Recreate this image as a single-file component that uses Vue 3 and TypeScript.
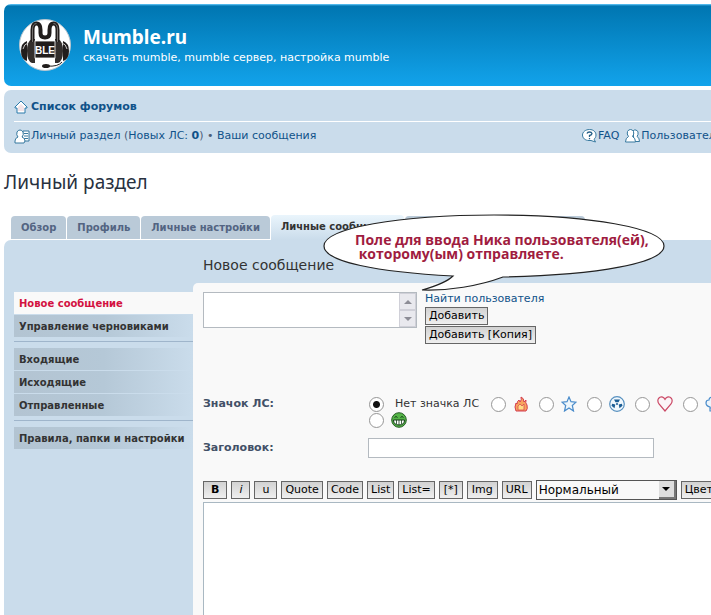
<script setup lang="ts">
import { ref } from 'vue'

interface Tab {
  label: string
  active?: boolean
}

const tabs: Tab[] = [
  { label: 'Обзор' },
  { label: 'Профиль' },
  { label: 'Личные настройки' },
  { label: 'Личные сообщения', active: true },
]

const menu: Tab[][] = [
  [{ label: 'Новое сообщение', active: true }, { label: 'Управление черновиками' }],
  [{ label: 'Входящие' }, { label: 'Исходящие' }, { label: 'Отправленные' }],
  [{ label: 'Правила, папки и настройки' }],
]

const icons = ['fire', 'star', 'radioactive', 'heart', 'bulb']
const codes = ['B', 'i', 'u', 'Quote', 'Code', 'List', 'List=', '[*]', 'Img', 'URL']

const chosen = ref('none')
const recipients = ref('')
const subject = ref('')
const message = ref('')
const size = ref('normal')
</script>

<template>
  <div class="page">
    <header class="banner">
      <svg class="logo" viewBox="0 0 52 52" aria-hidden="true">
        <circle cx="26" cy="26" r="25.5" fill="#fff" stroke="#b9c6cf" />
        <path d="M8 22Q2 24 2 32T8 42zM44 22q6 2 6 10t-6 10z" fill="#211d1c" />
        <path d="M13 20q-5 2-5 12t5 12h3V20zM39 20q5 2 5 12t-5 12h-3V20z" fill="#332e2c" />
        <path d="M4 30q1-5 5-6M48 30q-1-5-5-6" fill="none" stroke="#c9c6c4" />
        <path d="M13.500 23V11q0-6.500 4-6.500t4 6.500v3q0 4.500 4.500 4.500t4.500-4.500v-3q0-6.500 4-6.500t4 6.500v12" fill="none" stroke="#211d1c" stroke-width="4" />
        <path d="M13.500 23V11q0-6.500 4-6.500M34.500 4.500q4 0 4 6.500v12" fill="none" stroke="#8c8785" stroke-width=".8" />
        <rect x="16" y="22" width="20" height="17" fill="#211d1c" stroke="#fff" stroke-width=".8" />
        <text x="26" y="35" text-anchor="middle" class="logo-text">BLE</text>
        <path d="M43 43q-4 5-15 4" fill="none" stroke="#211d1c" />
        <ellipse cx="27" cy="47" rx="4" ry="2" fill="#211d1c" />
      </svg>
      <div>
        <h1>Mumble.ru</h1>
        <p>скачать mumble, mumble сервер, настройка mumble</p>
      </div>
    </header>

    <nav class="navbar">
      <div class="crumbs">
        <svg width="14" height="14" viewBox="0 0 14 14" aria-hidden="true">
          <path d="M7 1 1 7v1h2v5h8V8h2V7z" fill="#fff" stroke="#2b7bab" stroke-linejoin="round" />
          <path d="M7 4 4 7v4h6V7z" fill="#f2e4e8" />
        </svg>
        <a href="#" class="strong">Список форумов</a>
      </div>
      <div class="links">
        <div class="own">
          <svg width="16" height="15" viewBox="0 0 16 15" aria-hidden="true">
            <path d="M9 2h6v10H8z" fill="#fff" stroke="#37799f" />
            <path d="M10 4.500h4M10 7h4M10 9.500h4" stroke="#37799f" />
            <path d="M1 14v-2q0-3 3-4-2-2-1-5 1-2 3-2t3 2q1 3-1 5 3 1 3 4l-1 2z" fill="#fff" stroke="#37799f" />
          </svg>
          <a href="#">Личный раздел</a><span>&nbsp;(</span><a href="#">Новых ЛС: <b>0</b></a><span>)&nbsp;•&nbsp;</span><a href="#">Ваши сообщения</a>
        </div>
        <div class="site">
          <a href="#">
            <svg width="15" height="14" viewBox="0 0 15 14" aria-hidden="true">
              <path d="M7.500.5c4 0 6.500 2.500 6.500 5.500 0 2-1 3.500-2 4.200L13.500 13 9 11.500H7C3 11.500.5 9 .5 6S3.500.5 7.500.5z" fill="#fff" stroke="#37799f" />
              <path d="M5 4.500Q5.500 3 7.500 3T10 4.500Q10 6 7.500 6.500V8M7.500 9v1.300" fill="none" stroke="#245f87" stroke-width="1.300" />
            </svg>
            FAQ
          </a>
          <a href="#">
            <svg width="15" height="14" viewBox="0 0 15 14" aria-hidden="true">
              <path d="M8 2q1-1.500 3-1 3 1 2 4.500l-1 2q2.500 1 2.500 5H9z" fill="#fff" stroke="#37799f" />
              <path d="M.5 13q0-4 3-5.500Q1.500 5 2.500 2.500 3.500.5 5.500.5T8.500 2.500q1 2.500-1 5 3 1.500 3 5.500z" fill="#fff" stroke="#37799f" />
            </svg>
            Пользователи
          </a>
        </div>
      </div>
    </nav>

    <h2>Личный раздел</h2>

    <div class="workspace">
      <div class="tabs">
        <a v-for="tab in tabs" :key="tab.label" href="#" class="tab" :class="{ active: tab.active }">{{ tab.label }}</a>
        <span class="tab covered"></span>
      </div>

      <div class="panel">
        <aside class="menu">
          <ul v-for="(group, index) in menu" :key="index">
            <li v-for="item in group" :key="item.label">
              <a href="#" :class="{ active: item.active }">{{ item.label }}</a>
            </li>
          </ul>
        </aside>

        <main>
          <h3>Новое сообщение</h3>
          <form class="form" @submit.prevent>
            <div class="recipients">
              <div class="list-box">
                <textarea v-model="recipients" aria-label="Получатели"></textarea>
                <div class="scroller" aria-hidden="true">
                  <span><svg width="8" height="4" viewBox="0 0 8 4"><path d="m4 0 4 4H0z" fill="#8d8d96" /></svg></span>
                  <span><svg width="8" height="4" viewBox="0 0 8 4"><path d="m4 4 4-4H0z" fill="#8d8d96" /></svg></span>
                </div>
              </div>
              <div class="actions">
                <a href="#">Найти пользователя</a>
                <button type="button">Добавить</button>
                <button type="button">Добавить [Копия]</button>
              </div>
            </div>

            <div class="field icon-field">
              <span class="label">Значок ЛС:</span>
              <div class="icons">
                <div class="icon-row">
                  <label class="none"><input v-model="chosen" type="radio" name="icon" value="none">Нет значка ЛС</label>
                  <label v-for="icon in icons" :key="icon">
                    <input v-model="chosen" type="radio" name="icon" :value="icon" :aria-label="icon">
                    <svg width="16" height="16" viewBox="0 0 16 16" aria-hidden="true">
                      <g v-if="icon === 'fire'">
                        <path d="M3 15Q1 11 3 7l1 1Q4 5 6 4l1 2q2-2 1-5 3 1 3 5l2-2q-1 3 1 5 1 4-1 6z" fill="#f7a45e" stroke="#d43d51" />
                        <path d="m5 14 0-4 2-2 2 2 2-2v6z" fill="#ffdc84" stroke="#d43d51" stroke-width=".7" />
                      </g>
                      <path v-else-if="icon === 'star'" d="m8 1 2 4.700 5 .5-3.700 3.300L12.500 15 8 12l-4.500 3 1.200-5.500L1 6.200l5-.5z" fill="#eef6fb" stroke="#4a8ccb" stroke-width="1.200" />
                      <g v-else-if="icon === 'radioactive'">
                        <circle cx="8" cy="8" r="7.300" fill="#f1f8fd" stroke="#5790bf" stroke-width="1.200" />
                        <path d="M6.500 6.300 5 3.500h6L9.500 6.300zM6.300 8.500l-.8 3.800L2.500 9.800 3.200 7.800zM9.700 8.500l.8 3.800 3-2.500-.7-2z" fill="#1b5d94" />
                        <circle cx="8" cy="8" r="1" fill="#1b5d94" />
                      </g>
                      <path v-else-if="icon === 'heart'" d="M8 15 2 8Q0 5 1.500 2.500 4-.5 7 2l1 1.500L9 2q3-2.500 5.500.5Q16 5 14 8z" fill="#fbf5f7" stroke="#cb4966" stroke-width="1.200" />
                      <path v-else d="M5 15v-4Q1 10 1 7t3-3q0-3 4-3t4 3q3 0 3 3t-4 4v4zM5 12h6" fill="#edf5fb" stroke="#4a8ccb" stroke-width="1.200" />
                    </svg>
                  </label>
                </div>
                <div class="icon-row">
                  <label>
                    <input v-model="chosen" type="radio" name="icon" value="grin" aria-label="grin">
                    <svg width="16" height="16" viewBox="0 0 16 16" aria-hidden="true">
                      <circle cx="8" cy="8" r="7.300" fill="#55b547" stroke="#285d26" />
                      <path d="M3.500 5.500q1.500-2 3 0M9.500 5.500q1.500-2 3 0" fill="none" stroke="#153d18" />
                      <path d="M2.500 8h11q0 5-5.500 5T2.500 8z" fill="#fff" stroke="#153d18" />
                      <path d="M5.500 8v4M8 8v5M10.500 8v4" stroke="#153d18" stroke-width=".8" />
                    </svg>
                  </label>
                </div>
              </div>
            </div>

            <div class="field">
              <label class="label" for="subject">Заголовок:</label>
              <input id="subject" v-model="subject" class="subject" type="text">
            </div>

            <div class="toolbar">
              <button v-for="code in codes" :key="code" type="button" :class="{ bold: code === 'B', italic: code === 'i', under: code === 'u', roomy: code === '[*]' || code === 'Img' }">{{ code }}</button>
              <div class="select">
                <select v-model="size" aria-label="Размер шрифта">
                  <option value="small">Маленький</option>
                  <option value="normal">Нормальный</option>
                  <option value="large">Большой</option>
                </select>
                <span class="arrow" aria-hidden="true"><svg width="8" height="4" viewBox="0 0 8 4"><path d="m4 4 4-4H0z" fill="#000" /></svg></span>
              </div>
              <button type="button">Цвет</button>
            </div>
            <textarea v-model="message" class="editor" aria-label="Сообщение"></textarea>
          </form>
        </main>
      </div>

      <div class="callout">
        <svg width="342" height="80" viewBox="0 0 342 80" aria-hidden="true">
          <path d="M130 62C55 58 1 48 1 32 1 14 76 1 171 1s170 13 170 31c0 17-66 29-161 31-24 9-55 14-81 13 14-4 26-9 31-14z" fill="#fff" stroke="#222" stroke-width="1.200" />
        </svg>
        <p>Поле для ввода Ника пользователя(ей),<br>&nbsp;которому(ым) отправляете.</p>
      </div>
    </div>
  </div>
</template>

<style>
body {
  background: #fff;
}
</style>

<style scoped>
.page {
  box-sizing: border-box;
  display: flex;
  flex-direction: column;
  min-height: 100vh;
  padding: 4px 0 0 4px;
  overflow: hidden;
  color: #4c5d77;
  font: 11px/14px "DejaVu Sans", Verdana, sans-serif;
}

h1,
h2,
h3,
p,
ul {
  margin: 0;
  padding: 0;
}

a {
  color: #105289;
  text-decoration: none;
}

button,
input,
select,
textarea {
  box-sizing: border-box;
  margin: 0;
  font: inherit;
}

.banner {
  display: flex;
  align-items: center;
  gap: 12px;
  height: 82px;
  padding-left: 15px;
  border-radius: 7px 0 0 7px;
  background: linear-gradient(#6aceff 0, #0076b1 2px, #12a3eb 100%);
  color: #fff;
}

.logo {
  width: 52px;
  height: 52px;
}

.logo-text {
  fill: #fff;
  font: bold 10px/12px "Liberation Sans", Arial, sans-serif;
}

h1 {
  font: bold 19px/26px "Noto Sans", "Trebuchet MS", sans-serif;
}

.banner p {
  line-height: 16px;
}

.navbar {
  box-sizing: border-box;
  height: 63px;
  margin-top: 4px;
  padding: 3px 0 0 10px;
  border-radius: 7px 0 0 7px;
  background: #cadceb;
}

.crumbs {
  display: flex;
  align-items: center;
  gap: 3px;
  height: 28px;
  border-bottom: 1px solid #fff;
}

.strong {
  font-weight: bold;
}

.links,
.own,
.site,
.site a {
  display: flex;
  align-items: center;
  white-space: nowrap;
}

.links {
  justify-content: space-between;
  height: 28px;
}

.own a {
  white-space: pre;
}

.own svg {
  margin-right: 1px;
}

.site {
  flex: none;
  width: 129px;
  gap: 6px;
}

.site a {
  flex: none;
  gap: 1px;
}

h2 {
  margin-top: 16px;
  color: #28313f;
  font: 19px/26px "Noto Sans", "Trebuchet MS", sans-serif;
}

.workspace {
  position: relative;
  display: flex;
  flex: 1;
  flex-direction: column;
  margin-top: 20px;
}

.tabs {
  display: flex;
  align-items: flex-end;
  gap: 1px;
  height: 25px;
  padding-left: 7px;
}

.tab {
  height: 23px;
  margin-bottom: 1px;
  padding: 0 10px;
  border-radius: 4px 4px 0 0;
  background: #bacad8;
  color: #536482;
  font-weight: bold;
  font-size: 10px;
  line-height: 23px;
  white-space: nowrap;
}

.tab.active {
  height: 25px;
  margin-bottom: 0;
  background: linear-gradient(#eaf5fc, #cadceb);
  color: #333;
}

.tab.covered {
  width: 160px;
}

.panel {
  display: flex;
  flex: 1;
  border-radius: 7px 0 0 0;
  background: #cadceb;
}

.menu {
  flex: 0 0 179px;
  padding: 52px 0 0 10px;
}

.menu ul {
  list-style: none;
}

.menu ul + ul {
  margin-top: 4px;
  padding-top: 6px;
  border-top: 1px solid #9fb5cb;
}

.menu li {
  margin-bottom: 1px;
}

.menu a {
  display: block;
  padding: 1px 0 0 5px;
  background: linear-gradient(90deg, #b3c4d2, #b5c8d7 50%, #cadceb);
  color: #333;
  font-weight: bold;
  font-size: 10px;
  line-height: 21px;
  white-space: nowrap;
}

.menu a.active {
  background: #f9f9f9;
  color: #d31141;
}

main {
  display: flex;
  flex: 1;
  flex-direction: column;
  min-width: 0;
}

h3 {
  height: 43px;
  padding: 13px 0 0 10px;
  box-sizing: border-box;
  color: #333;
  font: 14px/24px "DejaVu Sans", Verdana, sans-serif;
}

.form {
  display: flex;
  flex: 1;
  flex-direction: column;
  padding: 9px 0 0 10px;
  border-radius: 5px 0 0 0;
  background: #f9f9f9;
}

.recipients {
  display: flex;
  gap: 8px;
  height: 101px;
}

.list-box {
  display: flex;
  box-sizing: border-box;
  width: 214px;
  height: 36px;
  border: 1px solid #b4bac0;
  background: #fff;
}

.list-box textarea {
  flex: 1;
  min-width: 0;
  border: 0;
  background: #fff;
  resize: none;
  overflow: hidden;
}

.scroller {
  display: flex;
  flex: 0 0 17px;
  flex-direction: column;
}

.scroller span {
  display: flex;
  flex: 1;
  align-items: center;
  justify-content: center;
  border: 1px solid #d0d0d8;
  background: #e9e9ee;
}

.actions {
  display: flex;
  flex-direction: column;
  align-items: flex-start;
  gap: 1px;
}

button {
  height: 18px;
  padding: 0 3px;
  border: 1px solid #666;
  border-radius: 0;
  background: linear-gradient(#d2d2d2, #efefef);
  color: #000;
  line-height: 14px;
  white-space: nowrap;
}

.field {
  display: flex;
  align-items: center;
  height: 20px;
}

.icon-field {
  align-items: flex-start;
  height: 45px;
}

.label {
  flex: 0 0 165px;
  color: #425067;
  font-weight: bold;
}

.icon-field > .label {
  padding-top: 4px;
}

.icons {
  padding-left: 1px;
}

.icon-row,
.icon-row label {
  display: flex;
  align-items: center;
  white-space: nowrap;
}

.icon-row {
  gap: 10px;
  height: 16px;
}

.icon-row:first-child {
  padding-top: 3px;
}

.icon-row label {
  gap: 7px;
}

.icon-row .none {
  gap: 11px;
  margin-right: 2px;
  color: #333;
}

.icon-row input {
  width: 15px;
  height: 15px;
  border: 1px solid #969696;
  border-radius: 50%;
  background: #fff;
  appearance: none;
}

.icon-row input:checked {
  background: radial-gradient(circle, #111 3px, #fff 4px);
}

.subject {
  width: 286px;
  height: 20px;
  border: 1px solid #b4bac0;
  background: #fff;
}

.toolbar {
  display: flex;
  align-items: center;
  gap: 4px;
  height: 20px;
  margin-top: 22px;
}

.toolbar button {
  flex: none;
}

.toolbar .bold {
  padding: 0 7px;
  font-weight: bold;
}

.toolbar .italic {
  padding: 0 7px;
  font-style: italic;
}

.toolbar .under {
  padding: 0 7px;
}

.toolbar .roomy {
  padding: 0 4px;
}

.select {
  display: flex;
  position: relative;
  flex: 0 0 141px;
}

select {
  width: 100%;
  height: 20px;
  padding: 0 18px 0 2px;
  border: 1px solid #555;
  border-radius: 0;
  background: #f9f9f9;
  color: #000;
  font-size: 12px;
  appearance: none;
}

.arrow {
  position: absolute;
  top: 1px;
  right: 1px;
  bottom: 1px;
  display: flex;
  align-items: center;
  justify-content: center;
  width: 15px;
  border-right: 2px solid #777;
  border-bottom: 2px solid #777;
  background: #dedede;
  pointer-events: none;
}

.editor {
  flex: 1;
  min-height: 100px;
  margin-top: 2px;
  border: 1px solid #a9b8c2;
  border-width: 1px 0 0 1px;
  background: #fff;
  resize: none;
}

.callout {
  position: absolute;
  top: -1px;
  left: 319px;
}

.callout svg {
  display: block;
}

.callout p {
  position: absolute;
  top: 19px;
  left: 32px;
  color: #a01c40;
  font: bold 14px/14px "Open Sans", Tahoma, sans-serif;
  white-space: nowrap;
}
</style>
